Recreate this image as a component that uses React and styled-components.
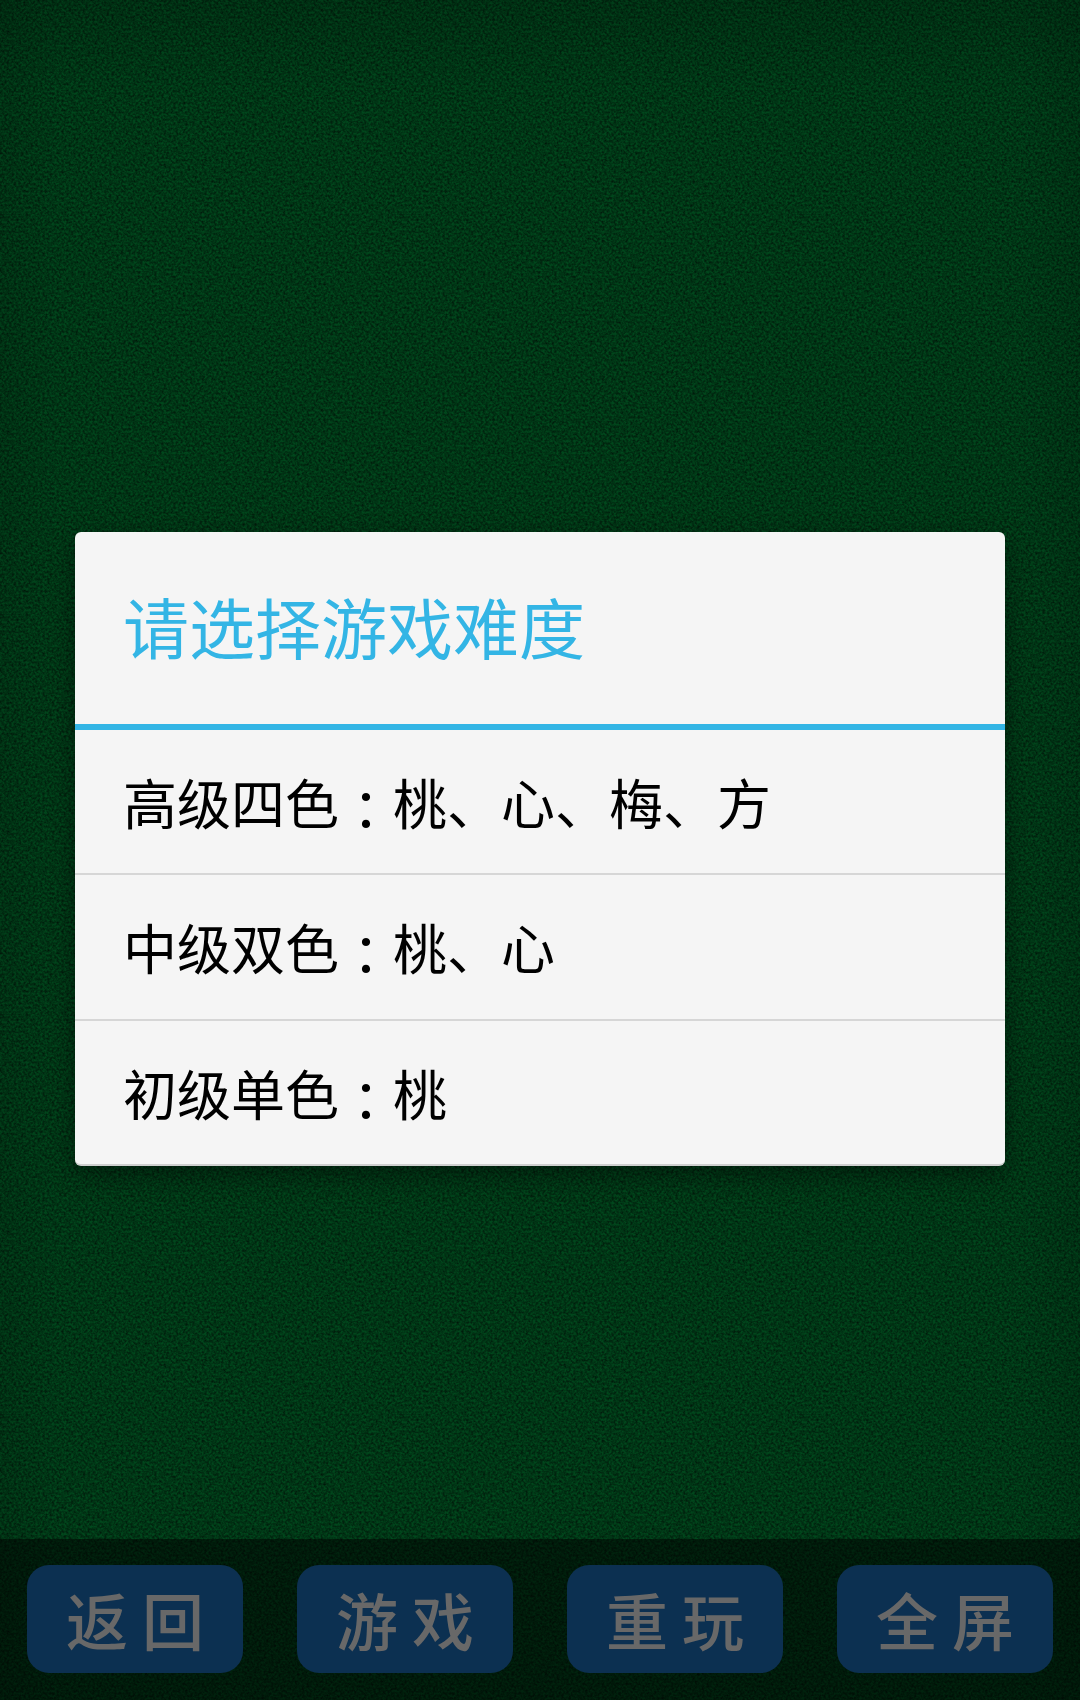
import React from "react";
import styled, { createGlobalStyle } from "styled-components";

const noise = `url("data:image/svg+xml,${encodeURIComponent(
  `<svg xmlns='http://www.w3.org/2000/svg' width='400' height='400'><filter id='n' x='0' y='0' width='100%' height='100%'><feTurbulence type='fractalNoise' baseFrequency='0.42' numOctaves='2' seed='7' stitchTiles='stitch'/><feColorMatrix type='matrix' values='0 0 0 0 0  0 0 0 0 0  0 0 0 0 0  1.1 0 0 0 -0.3'/></filter><rect width='400' height='400' filter='url(#n)'/></svg>`
)}")`;

const GlobalStyle = createGlobalStyle`
  html, body {
    margin: 0;
    padding: 0;
  }
  body {
    font-family: "Noto Sans CJK SC", "Noto Sans", sans-serif;
  }
`;

const Page = styled.div`
  position: relative;
  width: 1080px;
  height: 1700px;
  display: flex;
  flex-direction: column;
  overflow: hidden;
  background-color: #00471c;
  background-image:
    linear-gradient(to bottom, rgba(0, 0, 0, 0.14), rgba(0, 0, 0, 0) 90px),
    linear-gradient(to right, rgba(0, 0, 0, 0.1), rgba(0, 0, 0, 0) 60px, rgba(0, 0, 0, 0) 1020px, rgba(0, 0, 0, 0.1)),
    ${noise};
`;

const Table = styled.div`
  flex: 1;
`;

const BottomBar = styled.div`
  height: 161px;
  box-sizing: border-box;
  padding: 26px 27px 27px;
  display: flex;
  justify-content: space-between;
  background: rgba(0, 0, 0, 0.5);
`;

const BarButton = styled.button`
  width: 216px;
  height: 108px;
  padding: 0;
  border: none;
  border-radius: 22px;
  background: #0c3051;
  color: #686868;
  font-family: "Noto Sans CJK SC", sans-serif;
  font-size: 62px;
  font-weight: 500;
  letter-spacing: 14px;
  text-indent: 14px;
  line-height: 108px;
  text-align: center;
`;

const Overlay = styled.div`
  position: absolute;
  inset: 0;
  padding-bottom: 2px;
  display: flex;
  align-items: center;
  justify-content: center;
`;

const Dialog = styled.div`
  width: 930px;
  height: 634px;
  display: flex;
  flex-direction: column;
  background: #f5f5f5;
  border-radius: 6px;
  border-bottom: 2px solid #cfcfcf;
  box-sizing: border-box;
  box-shadow: 0 8px 26px rgba(0, 0, 0, 0.45);
  overflow: hidden;
`;

const Title = styled.div`
  height: 198px;
  box-sizing: border-box;
  padding: 0 0 6px 48px;
  display: flex;
  align-items: center;
  border-bottom: 6px solid #33b5e5;
  color: #33b5e5;
  font-size: 66px;
`;

const Option = styled.div`
  flex: 1;
  box-sizing: border-box;
  padding-left: 48px;
  display: flex;
  align-items: center;
  color: #000;
  font-size: 54px;
  & + & {
    border-top: 2px solid #d6d6d6;
  }
`;

// the colon sits centred in its cell, as in the JP cut of the font
const Colon = styled.span`
  display: inline-block;
  font-family: "Noto Sans CJK JP", sans-serif;
  transform: translateY(6px);
`;

const buttons = ["返回", "游戏", "重玩", "全屏"];
const options = [
  { level: "高级四色", suits: "桃、心、梅、方" },
  { level: "中级双色", suits: "桃、心" },
  { level: "初级单色", suits: "桃" },
];

const App = () => {
  return (
    <Page>
      <GlobalStyle />
      <Table />
      <BottomBar>
        {buttons.map((label) => (
          <BarButton key={label}>{label}</BarButton>
        ))}
      </BottomBar>
      <Overlay>
        <Dialog>
          <Title>请选择游戏难度</Title>
          {options.map((option) => (
            <Option key={option.level}>
              <span>
                {option.level}
                <Colon>：</Colon>
                {option.suits}
              </span>
            </Option>
          ))}
        </Dialog>
      </Overlay>
    </Page>
  );
};

export default App;
